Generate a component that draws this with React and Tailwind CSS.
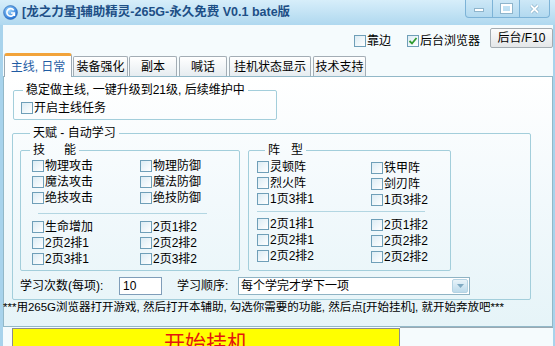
import React from "react";

const FONT = "font-['Liberation_Sans','Noto_Sans_CJK_SC',sans-serif]";

function Box({ checked }) {
  return (
    <span className="w-[12px] h-[12px] shrink-0 border border-[#6f9fb8] bg-linear-to-br from-[#dcecf4] to-white flex items-center justify-center">
      {checked && (
        <svg width="10" height="10" viewBox="0 0 10 10">
          <path d="M1.5 5 L4 7.5 L8.5 2" fill="none" stroke="#2f9b2f" strokeWidth="1.8" />
        </svg>
      )}
    </span>
  );
}

function Check({ label, checked, h = "h-[16px]", className = "" }) {
  return (
    <div className={`flex items-center ${h} ${className}`}>
      <Box checked={checked} />
      <span className="ml-[1px] whitespace-nowrap">{label}</span>
    </div>
  );
}

function Group({ legend, legendClass = "", className = "", children }) {
  return (
    <fieldset className={`border border-[#a3cedb] rounded-[2px] ${className}`}>
      <legend className={`px-[3px] leading-[14px] ${legendClass}`}>{legend}</legend>
      {children}
    </fieldset>
  );
}

function Col({ items, className = "" }) {
  return (
    <div className={`flex flex-col ${className}`}>
      {items.map((t, i) => (
        <Check key={i} label={t} />
      ))}
    </div>
  );
}

function Tab({ label, w, active }) {
  if (active) {
    return (
      <div
        className={`${w} h-[24px] mb-[-1px] bg-white border-x border-[#9aa8b2] border-t-[3px] border-t-[#f2a33a] rounded-t-[3px] flex items-center justify-center text-[#1f5ca3]`}
      >
        {label}
      </div>
    );
  }
  return (
    <div
      className={`${w} h-[20px] border border-b-0 border-[#a3adb5] rounded-t-[2px] bg-linear-to-b from-white to-[#e6ecf0] flex items-center justify-center`}
    >
      {label}
    </div>
  );
}

function TitleIcon() {
  return (
    <svg width="15" height="15" viewBox="0 0 16 16">
      <defs>
        <radialGradient id="ic" cx="40%" cy="35%" r="70%">
          <stop offset="0" stopColor="#9fd8ff" />
          <stop offset="1" stopColor="#1e6cd0" />
        </radialGradient>
      </defs>
      <circle cx="8" cy="8" r="7.4" fill="url(#ic)" stroke="#2a63ad" strokeWidth="0.6" />
      <path d="M11.4 5.6 A4 4 0 1 0 11.9 9.2" fill="none" stroke="white" strokeWidth="1.7" />
      <path d="M8.6 8.6 H12.2 V11.8" fill="none" stroke="white" strokeWidth="1.5" />
    </svg>
  );
}

export default function App() {
  return (
    <div
      className={`w-[555px] h-[346px] overflow-hidden bg-[#a8d3ec] ${FONT} text-[12px] leading-[14px] text-black flex flex-col`}
    >
      {/* title bar */}
      <div className="h-[25px] shrink-0 flex items-start bg-linear-to-b from-[#d7eefa] to-[#afd8ef]">
        <div className="flex items-center h-[24px] pl-[3px]">
          <TitleIcon />
          <span className="ml-[4px] text-[12.5px] font-bold text-[#1d4f86] whitespace-nowrap">
            [龙之力量]辅助精灵-265G-永久免费 V0.1 bate版
          </span>
        </div>
        <div className="ml-auto mr-[5px] flex">
          <div className="w-[28px] h-[18px] border border-t-0 border-[#7db3d7] rounded-bl-[4px] bg-linear-to-b from-[#cde8f7] to-[#b2d9ef] flex items-center justify-center">
            <span className="w-[10px] h-[4px] mt-[3px] bg-white border border-[#8fb5cc]" />
          </div>
          <div className="w-[27px] h-[18px] border border-t-0 border-l-0 border-[#7db3d7] bg-linear-to-b from-[#cde8f7] to-[#b2d9ef] flex items-center justify-center">
            <span className="w-[11px] h-[9px] border-2 border-white ring-1 ring-[#8fb5cc]" />
          </div>
          <div className="w-[30px] h-[18px] border border-t-0 border-l-0 border-[#7db3d7] rounded-br-[4px] bg-linear-to-b from-[#cde8f7] to-[#b2d9ef] flex items-center justify-center">
            <svg width="11" height="10" viewBox="0 0 11 10">
              <path d="M2 1.5 L9 8.5 M9 1.5 L2 8.5" stroke="#8fb5cc" strokeWidth="3.2" />
              <path d="M2 1.5 L9 8.5 M9 1.5 L2 8.5" stroke="white" strokeWidth="1.8" />
            </svg>
          </div>
        </div>
      </div>

      {/* client */}
      <div className="flex-1 ml-[3px] mr-[2px] bg-[#f5fbfd] flex flex-col min-h-0">
        <div className="h-[28px] shrink-0 flex items-center justify-end">
          <Check label="靠边" className="mt-[3px]" />
          <Check label="后台浏览器" checked className="mt-[3px] ml-[16px]" />
          <div className="ml-[10px] mb-[2px] w-[63px] h-[20px] border border-[#a4acb2] rounded-[2px] bg-linear-to-b from-[#fbfbfb] to-[#e4e7e9] flex items-center justify-center whitespace-nowrap">
            后台/F10
          </div>
        </div>

        <div className="h-[23px] shrink-0 flex items-end pl-[1px] relative z-10">
          <Tab label="主线, 日常" w="w-[68px]" active />
          <div className="ml-[1px]">
            <Tab label="装备强化" w="w-[55px]" />
          </div>
          <div className="ml-[1px]">
            <Tab label="副本" w="w-[48px]" />
          </div>
          <div className="ml-[2px]">
            <Tab label="喊话" w="w-[48px]" />
          </div>
          <div className="ml-[2px]">
            <Tab label="挂机状态显示" w="w-[82px]" />
          </div>
          <div className="ml-[2px]">
            <Tab label="技术支持" w="w-[53px]" />
          </div>
        </div>

        {/* tab panel */}
        <div className="h-[251px] shrink-0 border border-[#92b8c8] bg-linear-to-b from-white via-[#f2f9fc] to-[#e6f4f8] flex flex-col">
          <Group
            legend="稳定做主线, 一键升级到21级, 后续维护中"
            legendClass="ml-[9px]"
            className="ml-[9px] mt-[6px] w-[264px]"
          >
            <div className="pl-[7px] pt-[4px] pb-[4px]">
              <Check label="开启主线任务" h="h-[14px]" />
            </div>
          </Group>

          <Group legend="天赋 - 自动学习" legendClass="ml-[17px]" className="ml-[8px] mt-[6px] w-[519px]">
            <div className="pl-[7px] pt-[3px] pb-[4px]">
              <div className="flex gap-[8px]">
                <Group
                  legend={
                    <>
                      <span className="mr-[19px]">技</span>能
                    </>
                  }
                  legendClass="ml-[9px]"
                  className="w-[220px]"
                >
                  <div className="pl-[11px] pt-[1px] pb-[3px]">
                    <div className="flex">
                      <Col items={["物理攻击", "魔法攻击", "绝技攻击"]} className="w-[108px]" />
                      <Col items={["物理防御", "魔法防御", "绝技防御"]} />
                    </div>
                    <div className="ml-[6px] w-[169px] h-[1px] bg-[#b3d6e2] mt-[7px]" />
                    <div className="flex mt-[5px]">
                      <Col items={["生命增加", "2页2排1", "2页3排1"]} className="w-[108px]" />
                      <Col items={["2页1排2", "2页2排2", "2页3排2"]} />
                    </div>
                  </div>
                </Group>
                <Group
                  legend={
                    <>
                      <span className="mr-[11px]">阵</span>型
                    </>
                  }
                  legendClass="ml-[16px]"
                  className="w-[203px]"
                >
                  <div className="pl-[8px] pt-[2px] pb-[3px]">
                    <div className="flex">
                      <Col items={["灵顿阵", "烈火阵", "1页3排1"]} className="w-[114px]" />
                      <Col items={["铁甲阵", "剑刃阵", "1页3排2"]} className="pt-[1px]" />
                    </div>
                    <div className="w-[168px] h-[1px] bg-[#b3d6e2] mt-[3px]" />
                    <div className="flex mt-[4px]">
                      <Col items={["2页1排1", "2页2排1", "2页2排2"]} className="w-[114px]" />
                      <Col items={["2页1排2", "2页2排2", "2页2排2"]} className="pt-[1px]" />
                    </div>
                  </div>
                </Group>
              </div>

              <div className="mt-[6px] h-[18px] flex items-center">
                <span className="w-[99px] whitespace-nowrap">学习次数(每项):</span>
                <div className="w-[43px] h-[18px] border border-[#7f9db9] bg-white flex items-center pl-[3px]">10</div>
                <span className="ml-[15px] w-[61px] whitespace-nowrap">学习顺序:</span>
                <div className="w-[232px] h-[18px] border border-[#8fb3c4] bg-white flex items-center pl-[2px]">
                  <span className="flex-1 whitespace-nowrap">每个学完才学下一项</span>
                  <span className="w-[16px] h-[14px] mr-[1px] rounded-[2px] border border-[#b5d3e3] bg-linear-to-b from-[#e8f3f9] to-[#bcdaeb] flex items-center justify-center">
                    <svg width="7" height="4" viewBox="0 0 7 4">
                      <path d="M0 0 H7 L3.5 4 Z" fill="#7fa9c2" />
                    </svg>
                  </span>
                </div>
              </div>
            </div>
          </Group>

          <div className="ml-[-1px] text-[11.5px] whitespace-nowrap">
            ***用265G浏览器打开游戏, 然后打开本辅助, 勾选你需要的功能, 然后点[开始挂机], 就开始奔放吧***
          </div>
        </div>

        {/* bottom buttons */}
        <div className="mt-[1px] flex flex-1">
          <div className="ml-[9px] w-[388px] h-[40px] shrink-0 bg-[#ffff00] border border-[#8c8c8c] flex justify-center pt-[2px] text-[21px] leading-[24px] text-[#e4150f]">
            开始挂机
          </div>
          <div className="flex-1 mt-[-1px] border-t border-[#9aa9b2]" />
        </div>
      </div>
    </div>
  );
}
